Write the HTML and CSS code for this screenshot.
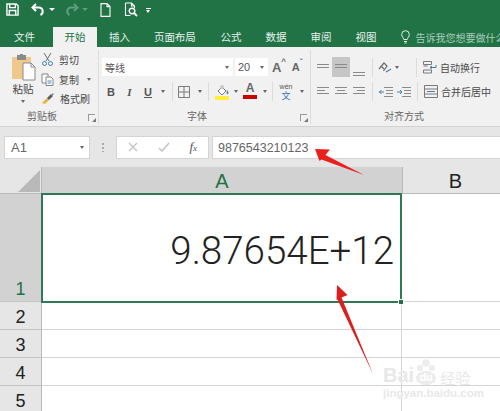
FILE: index.html
```html
<!DOCTYPE html>
<html>
  <head>
    <meta charset="UTF-8">
    <title>Excel</title>
    <link rel="stylesheet" href="styles.css">
  </head>
  <body>
    <div class="app">
      <!-- quick access toolbar -->
      <div class="qat">
        <svg class="q q-save" width="13" height="13" viewBox="0 0 14 14" fill="none" stroke="#fff" stroke-width="1.5"><path d="M1 1h10l2 2v10H1z"/><path d="M4 1v4h6V1M3.500 13V8h7v5"/></svg>
        <svg class="q q-undo" width="15" height="13" viewBox="0 0 15 13" fill="none" stroke="#fff" stroke-width="2"><path d="M5 1L1.500 4.500 5 8"/><path d="M2 4.500h6.500a4 4 0 0 1 1 7.500"/></svg>
        <span class="q q-arrow"></span>
        <svg class="q q-redo" width="15" height="13" viewBox="0 0 15 13" fill="none" stroke="#5f9c7c" stroke-width="2"><path d="M10 1l3.500 3.500L10 8"/><path d="M13 4.500H6.500a4 4 0 0 0-1 7.500"/></svg>
        <span class="q q-arrow dim"></span>
        <svg class="q q-new" width="11" height="14" viewBox="0 0 11 14" fill="none" stroke="#fff" stroke-width="1.100"><path d="M1 .6h6l3 3v9.800H1zM7 .6v3h3"/></svg>
        <svg class="q q-prev" width="15" height="15" viewBox="0 0 15 15" fill="none" stroke="#fff" stroke-width="1.100"><path d="M1.500 1h6l3 3v2M1.500 1v12.500h5M7.500 1v3h3"/><circle cx="8" cy="9" r="2.800" stroke-width="1.400"/><path d="M10 11l3 3" stroke-width="1.800"/></svg>
        <span class="q q-more"></span>
      </div>

      <!-- tabs -->
      <div class="tabs">
        <span class="tab t-file">文件</span>
        <span class="tab t-home">开始</span>
        <span class="tab t-insert">插入</span>
        <span class="tab t-layout">页面布局</span>
        <span class="tab t-formula">公式</span>
        <span class="tab t-data">数据</span>
        <span class="tab t-review">审阅</span>
        <span class="tab t-view">视图</span>
        <svg class="bulb" width="9" height="14" viewBox="0 0 9 14" fill="none" stroke="#dfeee6" stroke-width="1"><path d="M2.800 9.500C2.500 7.500.7 7 .7 4.500a3.800 3.800 0 0 1 7.600 0C8.300 7 6.500 7.500 6.200 9.500zM3 11.500h3M3.500 13h2"/></svg>
        <span class="tell">告诉我您想要做什么</span>
      </div>

      <!-- ribbon -->
      <div class="ribbon">
        <div class="group g-clip">
          <div class="clip-body">
            <div class="paste">
              <svg width="25" height="27" viewBox="0 0 25 27"><rect x="1" y="3" width="19" height="22" fill="#efc98a"/><rect x="6" y="1" width="9" height="5" fill="#8a8a8a"/><rect x="9" y="0" width="3" height="2" fill="#8a8a8a"/><path d="M12 9h8l4 4v13H12z" fill="#fff" stroke="#8a8a8a"/><path d="M20 9v4h4" fill="none" stroke="#8a8a8a"/></svg>
              <span class="paste-label">粘贴</span>
              <span class="arrow"></span>
            </div>
            <div class="clip-list">
              <div class="clip-item">
                <svg width="13" height="13" viewBox="0 0 13 13" fill="none" stroke="#6a6a6a"><path d="M3 0l5 8M10 0L5 8"/><circle cx="3.500" cy="10.500" r="2" stroke="#3f7fb5"/><circle cx="9.500" cy="10.500" r="2" stroke="#3f7fb5"/></svg>
                <span>剪切</span>
              </div>
              <div class="clip-item">
                <svg width="13" height="13" viewBox="0 0 13 13" fill="#fff" stroke="#7a7a7a" stroke-width=".9"><path d="M1 1h6v9H1z"/><path d="M5 4h5l2 2v6.500H5z"/><path d="M6.500 8h4M6.500 10h4" stroke="#3f7fb5"/></svg>
                <span>复制</span>
                <span class="arrow copy-arrow"></span>
              </div>
              <div class="clip-item">
                <svg width="14" height="13" viewBox="0 0 14 13"><path d="M1 11l5-5 2 2-4 4z" fill="#e8b33f"/><path d="M6 6l4-4 2 2-4 4z" fill="#5a5a5a"/><path d="M10 3l2-2 1 1-2 2z" fill="#8a8a8a"/></svg>
                <span>格式刷</span>
              </div>
            </div>
          </div>
          <div class="group-label clip-label">
            <span>剪贴板</span>
            <span class="launcher"></span>
          </div>
        </div>

        <div class="group g-font">
          <div class="row font-top">
            <div class="select s-name"><span>等线</span><span class="arrow"></span></div>
            <div class="select s-size"><span>20</span><span class="arrow"></span></div>
            <span class="cell w18 grow-a">A<sup class="caret">^</sup></span>
            <span class="cell w18 shrink-a">A<sup class="caret blue">ˇ</sup></span>
          </div>
          <div class="row font-bottom">
            <span class="cell w18 fmt b">B</span>
            <span class="cell w19 fmt i">I</span>
            <span class="cell w18 fmt u">U</span>
            <span class="cell w11"><span class="arrow"></span></span>
            <span class="sep s-l4"></span>
            <span class="cell w22">
              <svg width="12" height="12" viewBox="0 0 12 12" fill="none" stroke="#7a7a7a"><path d="M.5.500h11v11H.500zM6 .5v11M.5 6h11"/></svg>
            </span>
            <span class="cell w9"><span class="arrow"></span></span>
            <span class="sep s-l4"></span>
            <span class="cell w22 s-l2">
              <svg width="15" height="16" viewBox="0 0 15 16"><path d="M3 7l4-4 4 4-4 4z" fill="#fff" stroke="#7a7a7a"/><circle cx="7" cy="3" r="2" fill="#c9c9c9"/><path d="M12 6c1.500 2 2 3 1 4s-2 0-1-4z" fill="#4a86b8"/><rect x="0" y="12" width="14" height="4" fill="#ffec3d"/></svg>
            </span>
            <span class="cell w5"><span class="arrow"></span></span>
            <span class="cell w24 color-a">A</span>
            <span class="cell w5"><span class="arrow"></span></span>
            <span class="sep s-l5"></span>
            <span class="cell w26 wen"><em>wén</em><b>文</b></span>
            <span class="cell w5"><span class="arrow"></span></span>
          </div>
          <div class="group-label font-label">
            <span>字体</span>
            <span class="launcher"></span>
          </div>
        </div>

        <div class="group g-align">
          <div class="row align-top">
            <span class="cell w18">
              <svg class="lines" width="12" height="6" viewBox="0 0 12 6"><path d="M0 .5h12M0 3.500h12"/></svg>
            </span>
            <span class="cell w18 active">
              <svg class="lines" width="12" height="6" viewBox="0 0 12 6"><path d="M0 .5h12M0 3.500h12"/></svg>
            </span>
            <span class="cell w18 bottom">
              <svg class="lines" width="12" height="6" viewBox="0 0 12 6"><path d="M0 2.500h12M0 5.500h12"/></svg>
            </span>
            <span class="sep s-l4"></span>
            <span class="cell w18 s-l3">
              <svg width="14" height="13" viewBox="0 0 14 13" fill="none" stroke="#6a6a6a" stroke-width="1.200"><path d="M1 8l5-6 3 3-3.500 5"/><path d="M3 5l3 3"/><path d="M8 11l5-3" stroke="#3f7fb5"/></svg>
            </span>
            <span class="cell w5"><span class="arrow"></span></span>
            <span class="sep s-l17"></span>
            <span class="cell w18 s-l4">
              <svg width="14" height="13" viewBox="0 0 14 13" fill="none" stroke="#7a7a7a"><path d="M.5.500h8v3h-8zM.5 5h4M.5 9h8v3h-8z"/><path d="M13 4v2.500H7M9 5L7 6.500 9 8" stroke="#3f7fb5"/></svg>
            </span>
            <span class="wrap-text">自动换行</span>
          </div>
          <div class="row align-bottom">
            <span class="cell w18">
              <svg class="lines" width="12" height="9" viewBox="0 0 12 9"><path d="M0 .5h12M0 3.500h8M0 6.500h12"/></svg>
            </span>
            <span class="cell w18">
              <svg class="lines" width="12" height="9" viewBox="0 0 12 9"><path d="M0 .5h12M2 3.500h8M0 6.500h12"/></svg>
            </span>
            <span class="cell w18">
              <svg class="lines" width="12" height="9" viewBox="0 0 12 9"><path d="M0 .5h12M4 3.500h8M0 6.500h12"/></svg>
            </span>
            <span class="sep s-l4"></span>
            <span class="cell w18 s-l4">
              <svg class="lines" width="14" height="10" viewBox="0 0 14 10"><path d="M5 .5h9M7 3.500h7M7 6.500h7M5 9.500h9"/><path d="M5 5H0M2.500 3L.5 5l2 2" stroke="#3f7fb5"/></svg>
            </span>
            <span class="cell w18">
              <svg class="lines" width="14" height="10" viewBox="0 0 14 10"><path d="M5 .5h9M7 3.500h7M7 6.500h7M5 9.500h9"/><path d="M0 5h5M3 3l2 2-2 2" stroke="#3f7fb5"/></svg>
            </span>
            <span class="sep s-l4"></span>
            <span class="cell w18 s-l4">
              <svg width="14" height="13" viewBox="0 0 14 13" fill="none" stroke="#7a7a7a"><path d="M.5.500h13v12H.500zM.5 4h13M.5 9h13"/><path d="M3 6.500h8" stroke="#3f7fb5"/></svg>
            </span>
            <span class="wrap-text">合并后居中</span>
          </div>
          <div class="group-label align-label">
            <span>对齐方式</span>
          </div>
        </div>
      </div>

      <!-- formula bar -->
      <div class="formula-bar">
        <div class="name-box"><span>A1</span><span class="arrow"></span></div>
        <span class="dots"></span>
        <div class="fx-box">
          <svg width="10" height="10" viewBox="0 0 10 10" fill="none" stroke="#c4c4c4" stroke-width="1.300"><path d="M1 1l8 8M9 1L1 9"/></svg>
          <svg width="12" height="10" viewBox="0 0 12 10" fill="none" stroke="#c4c4c4" stroke-width="1.600"><path d="M1 6l3 3 7-8"/></svg>
          <span class="fx">f<small>x</small></span>
        </div>
        <div class="formula-input">9876543210123</div>
      </div>

      <!-- sheet -->
      <div class="sheet">
        <div class="corner"><span class="corner-tri"></span></div>
        <div class="col-head col-a">A</div>
        <div class="col-head col-b">B</div>

        <div class="row-head row-one">1</div>
        <div class="cell-a1">9.87654E+12<span class="handle"></span></div>
        <div class="blank"></div>

        <div class="row-head">2</div>
        <div class="blank a"></div>
        <div class="blank"></div>

        <div class="row-head">3</div>
        <div class="blank a"></div>
        <div class="blank"></div>

        <div class="row-head">4</div>
        <div class="blank a"></div>
        <div class="blank"></div>

        <div class="row-head">5</div>
        <div class="blank a"></div>
        <div class="blank"></div>
      </div>

      <!-- annotation arrows -->
      <svg class="notes" width="500" height="411" viewBox="0 0 500 411">
        <path d="M315 149L330 149.500 325.500 155 364 175 321.500 159.500 319.500 161z" fill="#e8211d"/>
        <path d="M337 285L347.500 295 341.500 297.500 373 374 337.500 299.500 336.500 300z" fill="#d9201c"/>
      </svg>

      <!-- watermark -->
      <div class="mark">
        <div class="mark-top"><span>Bai</span><span class="paw">du</span><span class="mark-cn">经验</span></div>
        <div class="mark-url">jingyan.baidu.com</div>
      </div>
    </div>
  </body>
</html>
```

FILE: styles.css
```css
* {
  box-sizing: border-box;
}

body {
  margin: 0;
  font-family: "Noto Sans CJK SC", "Liberation Sans", sans-serif;
  background: #fff;
}

.app {
  position: relative;
  width: 500px;
  height: 411px;
  overflow: hidden;
}

/* Title bar */
.qat {
  display: flex;
  align-items: center;
  height: 27px;
  padding: 0 0 8px 6px;
  background: #217346;
}

.q-undo { margin-left: 12px; }
.q-arrow { margin-left: 3px; border: 3px solid transparent; border-top: 3px solid #fff; border-bottom: 0; }
.q-arrow.dim { border-top-color: #5f9c7c; }
.q-redo { margin-left: 9px; }
.q-new { margin-left: 12px; }
.q-prev { margin-left: 13px; }
.q-more { margin-left: 7px; width: 5px; height: 4px; border-top: 1px solid #fff; position: relative; }
.q-more::after {
  content: "";
  position: absolute;
  top: 1px;
  left: 0;
  border: 2.5px solid transparent;
  border-top: 3px solid #fff;
  border-bottom: 0;
}

/* Tabs */
.tabs {
  display: flex;
  align-items: center;
  height: 20px;
  background: #217346;
  color: #e6f1eb;
  font-size: 10.500px;
}

.tab { flex-shrink: 0; line-height: 20px; white-space: nowrap; }
.bulb { flex-shrink: 0; }
.t-file { margin-left: 14px; }
.t-home {
  margin-left: 18px;
  width: 44px;
  height: 20px;
  background: #f1f1f1;
  color: #217346;
  text-align: center;
}
.t-insert { margin-left: 12px; }
.t-layout { margin-left: 24px; letter-spacing: -.1px; }
.t-formula { margin-left: 25px; }
.t-data { margin-left: 24px; }
.t-review { margin-left: 24px; }
.t-view { margin-left: 24px; }
.bulb { margin-left: 24px; }
.tell {
  margin-left: 6px;
  color: #a9cdb9;
  font-size: 10px;
  white-space: nowrap;
}

/* Ribbon */
.ribbon {
  display: flex;
  height: 80px;
  padding: 3px 0 2px;
  background: #f1f1f1;
  border-bottom: 1px solid #d2d2d2;
  font-size: 10px;
  color: #4a4a4a;
  overflow: hidden;
}

.group {
  position: relative;
  display: flex;
  flex-direction: column;
  flex-shrink: 0;
  border-right: 1px solid #dcdcdc;
}

.g-clip { width: 99px; }
.g-font { width: 212px; padding: 7px 0 0 3px; }
.g-align { width: 189px; padding: 7px 0 0 3px; border-right: 0; }

.group-label {
  position: absolute;
  left: 0;
  right: 0;
  bottom: 0;
  height: 16px;
  line-height: 16px;
  color: #666;
  font-size: 10px;
}

.clip-label { padding-left: 27px; }
.font-label { padding-left: 88px; }
.align-label { padding-left: 73px; }

.launcher {
  position: absolute;
  bottom: 3px;
  right: 3px;
  width: 7px;
  height: 7px;
  border-left: 1px solid #999;
  border-top: 1px solid #999;
}
.launcher::after {
  content: "";
  position: absolute;
  right: -1px;
  bottom: -1px;
  border: 2px solid #777;
  border-top-color: transparent;
  border-left-color: transparent;
}

.arrow {
  display: inline-block;
  border: 2.500px solid transparent;
  border-top: 3px solid #666;
  border-bottom: 0;
}

.clip-body {
  display: flex;
  padding: 4px 0 0 10px;
}

.paste {
  display: flex;
  flex-direction: column;
  align-items: center;
  width: 26px;
}
.paste-label { font-size: 10.500px; line-height: 16px; }
.paste .arrow { margin-top: 3px; }

.clip-list {
  display: flex;
  flex-direction: column;
  margin: -4px 0 0 5px;
}

.clip-item {
  display: flex;
  align-items: center;
  gap: 5px;
  height: 19.500px;
  white-space: nowrap;
}
.copy-arrow { margin-left: 3px; }

.row {
  display: flex;
  align-items: center;
}

.font-top, .align-top { height: 20px; }
.font-bottom, .align-bottom { height: 19px; margin-top: 5px; }

.select {
  display: flex;
  align-items: center;
  justify-content: space-between;
  height: 18px;
  padding: 0 4px 0 3px;
  background: #fff;
  color: #555;
}
.s-name { width: 131px; }
.s-size { width: 33px; margin: 0 2px 0 2px; font-family: "Liberation Sans", sans-serif; font-size: 11px; }

.cell {
  display: flex;
  align-items: center;
  justify-content: center;
  flex-shrink: 0;
  height: 19px;
}
.w5 { width: 5px; }
.w9 { width: 9px; }
.w11 { width: 11px; }
.w18 { width: 18px; }
.w19 { width: 19px; }
.w22 { width: 22px; }
.w24 { width: 24px; }
.w26 { width: 26px; }

.grow-a, .shrink-a {
  font-family: "Liberation Sans", sans-serif;
  color: #666;
  font-weight: bold;
}
.grow-a { font-size: 13px; }
.shrink-a { font-size: 11px; }
.caret {
  font-size: 8px;
  line-height: 1;
  align-self: flex-start;
  color: #666;
}
.caret.blue { color: #3f7fb5; }

.fmt {
  font-family: "Liberation Serif", serif;
  font-size: 11px;
  color: #555;
  font-weight: bold;
}
.fmt.b { font-family: "Liberation Sans", sans-serif; }
.fmt.i { font-style: italic; }
.fmt.u { font-family: "Liberation Sans", sans-serif; text-decoration: underline; }

.sep {
  flex-shrink: 0;
  width: 1px;
  height: 19px;
  background: #dcdcdc;
}
.s-l2 { margin-left: 2px; }
.s-l3 { margin-left: 3px; }
.s-l4 { margin-left: 4px; }
.s-l5 { margin-left: 5px; }
.s-l17 { margin-left: 17px; }

.color-a {
  position: relative;
  font-family: "Liberation Sans", sans-serif;
  font-weight: bold;
  font-size: 12px;
  color: #666;
  line-height: 12px;
  align-items: flex-start;
}
.color-a::after {
  content: "";
  position: absolute;
  left: 5px;
  right: 5px;
  bottom: 2px;
  height: 4px;
  background: #c00;
}

.wen {
  flex-direction: column;
  font-size: 7px;
  line-height: 8px;
  color: #555;
}
.wen em { font-style: normal; font-family: "Liberation Sans", sans-serif; }
.wen b { font-weight: normal; font-size: 9px; line-height: 10px; color: #2f75b5; }

.lines { fill: none; stroke: #8a8a8a; stroke-width: 1; }
.active { height: 20px; background: #c6c6c6; }
.bottom { align-items: flex-end; padding-bottom: 1px; }
.wrap-text { margin-left: 1px; white-space: nowrap; }

/* Formula bar */
.formula-bar {
  display: flex;
  align-items: center;
  height: 40px;
  padding-left: 4px;
  background: #e6e6e6;
  font-family: "Liberation Sans", sans-serif;
}

.name-box {
  display: flex;
  align-items: center;
  justify-content: space-between;
  width: 86px;
  height: 23px;
  padding: 0 5px 0 6px;
  background: #fff;
  border: 1px solid #d4d4d4;
  color: #666;
  font-size: 13px;
}

.dots {
  width: 2px;
  height: 9px;
  margin: 0 12px 0 12px;
  background: repeating-linear-gradient(#aaa 0 2px, transparent 2px 4px);
}

.fx-box {
  display: flex;
  align-items: center;
  justify-content: space-between;
  width: 93px;
  height: 23px;
  padding: 0 11px 0 11px;
  background: #fff;
  border: 1px solid #d4d4d4;
}

.fx {
  font-family: "Liberation Serif", serif;
  font-style: italic;
  font-size: 13px;
  color: #555;
}
.fx small { font-size: 9px; }

.formula-input {
  flex: 1;
  height: 23px;
  margin-left: 3px;
  padding-left: 5px;
  line-height: 22px;
  background: #fff;
  border: 1px solid #d4d4d4;
  border-right: 0;
  color: #666;
  font-size: 12.500px;
}

/* Sheet */
.sheet {
  display: grid;
  grid-template-columns: 42px 360px 98px;
  grid-template-rows: 27px 108px repeat(4, 28px);
  font-family: "Liberation Sans", sans-serif;
}

.corner {
  position: relative;
  background: #e6e6e6;
  border-right: 1px solid #b9b9b9;
  border-bottom: 1px solid #b9b9b9;
}
.corner-tri {
  position: absolute;
  right: 1px;
  bottom: 1px;
  border-style: solid;
  border-width: 0 0 22px 22px;
  border-color: transparent transparent #b9b9b9 transparent;
}

.col-head {
  display: flex;
  align-items: center;
  justify-content: center;
  padding-top: 3px;
  font-size: 20px;
  border-bottom: 1px solid #b9b9b9;
}
.col-a { background: #d2d2d2; color: #217346; }
.col-b { padding-left: 8px; background: #e6e6e6; color: #222; border-left: 1px solid #b9b9b9; }

.row-head {
  display: flex;
  align-items: center;
  justify-content: center;
  padding-top: 3px;
  background: #e6e6e6;
  border-right: 1px solid #b9b9b9;
  border-bottom: 1px solid #c4c4c4;
  color: #222;
  font-size: 18px;
}
.row-one {
  align-items: flex-end;
  padding: 0 0 1px;
  background: #d2d2d2;
  color: #217346;
  font-size: 18px;
}

.cell-a1 {
  position: relative;
  display: flex;
  align-items: center;
  justify-content: flex-end;
  padding: 4px 6px 0 0;
  border: 2px solid #2f7a54;
  color: #222;
  font-family: "Roboto", "Liberation Sans", sans-serif;
  font-weight: 300;
  font-size: 38.500px;
  margin-left: -1px;
  margin-top: -1px;
  margin-bottom: -1px;
}

.handle {
  position: absolute;
  right: -4px;
  bottom: -4px;
  width: 6px;
  height: 6px;
  background: #217346;
  border: 1px solid #fff;
}

.blank {
  border-bottom: 1px solid #d4d4d4;
}
.blank.a { border-right: 1px solid #d4d4d4; }

/* Overlays */
.notes {
  position: absolute;
  top: 0;
  left: 0;
}

.mark {
  position: absolute;
  left: 383px;
  top: 357px;
  color: #e8e8e8;
  font-family: "Liberation Sans", sans-serif;
  line-height: 1;
}
.mark-top {
  display: flex;
  align-items: flex-end;
  height: 28px;
  font-size: 20px;
  font-weight: bold;
}
.paw {
  width: 20px;
  height: 26px;
  margin-left: 2px;
  padding-top: 13px;
  background:
    radial-gradient(circle at 4px 9px, #ededed 3px, transparent 3.500px),
    radial-gradient(circle at 10px 4px, #ededed 3.500px, transparent 4px),
    radial-gradient(circle at 16px 9px, #ededed 3px, transparent 3.500px),
    radial-gradient(ellipse 10px 7px at 10px 19px, #ededed 100%, transparent 100%);
  color: #fff;
  font-size: 11px;
  text-align: center;
}
.mark-cn { margin-left: 4px; font-family: "Noto Sans CJK SC", sans-serif; font-size: 15px; font-weight: normal; }
.mark-url { margin-top: 3px; font-size: 11.500px; font-weight: bold; }
```
